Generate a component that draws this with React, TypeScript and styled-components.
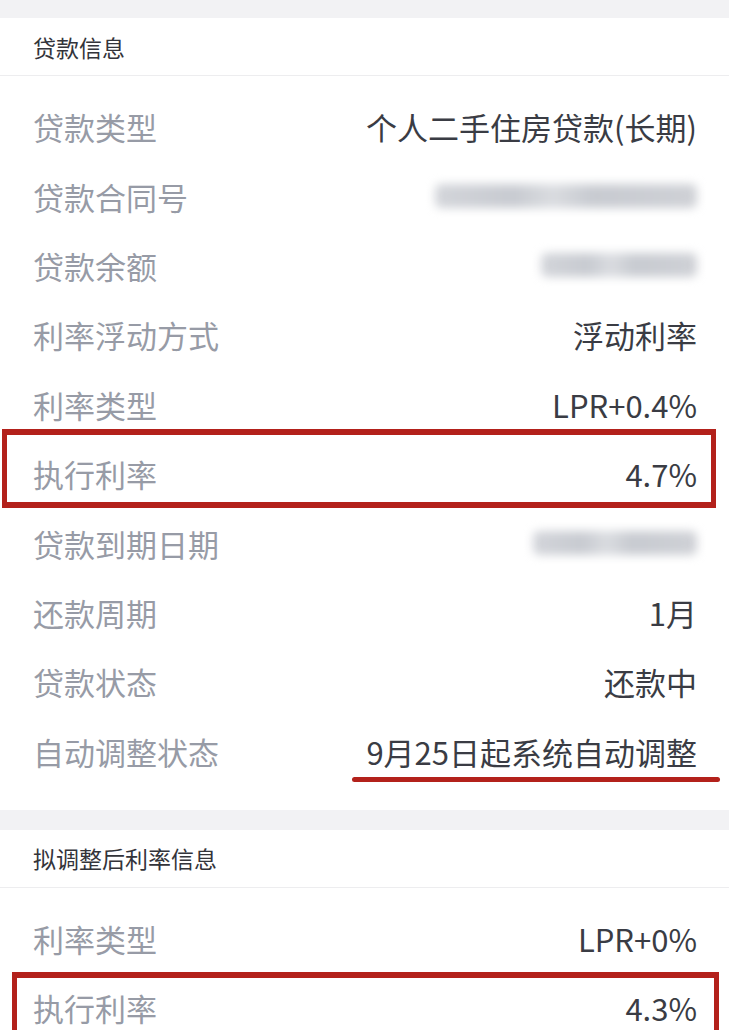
import React from 'react'
import styled, { createGlobalStyle } from 'styled-components'

const GlobalStyle = createGlobalStyle`
  html, body {
    margin: 0;
    padding: 0;
    background: #f2f2f4;
  }
  body {
    font-family: "Noto Sans CJK SC", "Noto Sans", sans-serif;
    -webkit-font-smoothing: antialiased;
  }
`

const Page = styled.div`
  width: 729px;
  height: 1030px;
  overflow: hidden;
  padding-top: 18px;
  box-sizing: border-box;
  display: flex;
  flex-direction: column;
  gap: 20px;
`

const Card = styled.section`
  background: #ffffff;
`

const CardHeader = styled.div`
  height: 58px;
  display: flex;
  align-items: center;
  padding: 0 33px;
  border-bottom: 1px solid #ededef;
  color: #33343a;
  font-size: 23px;
  box-sizing: border-box;
`

const List = styled.div`
  padding: 16px 0 24px;
`

const Row = styled.div`
  position: relative;
  height: 69.4px;
  display: flex;
  align-items: center;
  justify-content: space-between;
  padding: 0 32px 0 33px;
  font-size: 31px;
`

const Label = styled.span`
  color: #979ba6;
`

const Value = styled.span`
  color: #3a3c44;
`

const Masked = styled.span<{ $width: number }>`
  display: inline-block;
  width: ${p => p.$width}px;
  height: 24px;
  border-radius: 6px;
  background: linear-gradient(90deg, #d3d5da 0%, #c8cbd1 30%, #dadce0 45%, #c8cbd1 60%, #cfd1d6 100%);
  filter: blur(5px);
`

const BoxMark = styled.div<{ $top: number; $left: number; $right: number; $bottom: number }>`
  position: absolute;
  top: ${p => p.$top}px;
  left: ${p => p.$left}px;
  right: ${p => p.$right}px;
  bottom: ${p => p.$bottom}px;
  border: 6px solid #b3211b;
  border-left-width: 5px;
  border-right-width: 5px;
  pointer-events: none;
`

const UnderlineMark = styled.div`
  position: absolute;
  left: 352px;
  right: 9px;
  bottom: 4px;
  height: 5px;
  border-radius: 3px;
  background: #b3211b;
`

type Item = {
  label: string
  value?: string
  masked?: number
  mark?: 'box' | 'underline'
}

const loanItems: Item[] = [
  { label: '贷款类型', value: '个人二手住房贷款(长期)' },
  { label: '贷款合同号', masked: 262 },
  { label: '贷款余额', masked: 156 },
  { label: '利率浮动方式', value: '浮动利率' },
  { label: '利率类型', value: 'LPR+0.4%' },
  { label: '执行利率', value: '4.7%', mark: 'box' },
  { label: '贷款到期日期', masked: 164 },
  { label: '还款周期', value: '1月' },
  { label: '贷款状态', value: '还款中' },
  { label: '自动调整状态', value: '9月25日起系统自动调整', mark: 'underline' },
]

const adjustedItems: Item[] = [
  { label: '利率类型', value: 'LPR+0%' },
  { label: '执行利率', value: '4.3%', mark: 'box' },
]

const InfoRow = ({ item, boxInset }: { item: Item; boxInset?: [number, number, number, number] }) => (
  <Row>
    <Label>{item.label}</Label>
    {item.masked ? <Masked $width={item.masked} /> : <Value>{item.value}</Value>}
    {item.mark === 'box' && boxInset && (
      <BoxMark $top={boxInset[0]} $right={boxInset[1]} $bottom={boxInset[2]} $left={boxInset[3]} />
    )}
    {item.mark === 'underline' && <UnderlineMark />}
  </Row>
)

const InfoCard = ({
  title,
  items,
  boxInset,
}: {
  title: string
  items: Item[]
  boxInset: [number, number, number, number]
}) => (
  <Card>
    <CardHeader>{title}</CardHeader>
    <List>
      {items.map(item => (
        <InfoRow key={item.label} item={item} boxInset={boxInset} />
      ))}
    </List>
  </Card>
)

export default function App() {
  return (
    <>
      <GlobalStyle />
      <Page>
        <InfoCard title="贷款信息" items={loanItems} boxInset={[-10, 13, 0, 2]} />
        <InfoCard title="拟调整后利率信息" items={adjustedItems} boxInset={[-1, 10, -20, 12]} />
      </Page>
    </>
  )
}
